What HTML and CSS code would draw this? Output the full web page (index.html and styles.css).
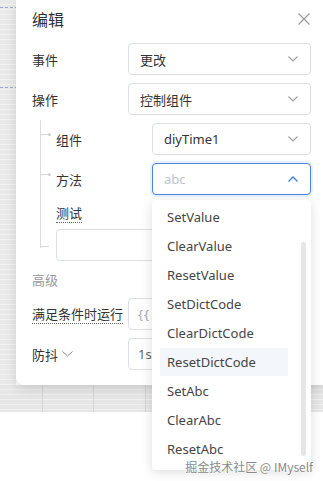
FILE: index.html
```html
<!DOCTYPE html>
<html lang="zh">
<head>
<meta charset="utf-8">
<link rel="stylesheet" href="styles.css">
</head>
<body>
<div class="page">
  <div class="top">
    <div class="strip"><div class="dash d1"></div><div class="dash d2"></div></div>
    <div class="dialog">
      <div class="header">
        <span class="title">编辑</span>
        <svg class="close" width="12" height="12" viewBox="0 0 12 12"><path d="M0.5 0.5L11.5 11.5M11.5 0.5L0.5 11.5" stroke="#9a9a9a" stroke-width="1.2" fill="none"/></svg>
      </div>
      <div class="form">
        <div class="row">
          <span class="lbl">事件</span>
          <div class="select"><span class="val">更改</span><svg class="chev" width="10" height="6" viewBox="0 0 10 6"><polyline points="0.5,0.5 5,5 9.5,0.5" stroke="#a0a0a0" stroke-width="1.1" fill="none"/></svg></div>
        </div>
        <div class="row">
          <span class="lbl">操作</span>
          <div class="select"><span class="val">控制组件</span><svg class="chev" width="10" height="6" viewBox="0 0 10 6"><polyline points="0.5,0.5 5,5 9.5,0.5" stroke="#a0a0a0" stroke-width="1.1" fill="none"/></svg></div>
        </div>
        <div class="nest">
          <div class="row conn">
            <span class="lbl">组件</span>
            <div class="select"><span class="val">diyTime1</span><svg class="chev" width="10" height="6" viewBox="0 0 10 6"><polyline points="0.5,0.5 5,5 9.5,0.5" stroke="#a0a0a0" stroke-width="1.1" fill="none"/></svg></div>
          </div>
          <div class="row conn">
            <span class="lbl">方法</span>
            <div class="select focus"><span class="ph">abc</span><svg class="chev" width="10" height="6" viewBox="0 0 10 6"><polyline points="0.5,5.5 5,1 9.5,5.5" stroke="#3f7fe0" stroke-width="1.4" fill="none"/></svg></div>
          </div>
          <div class="test">
            <span class="tlbl"><span class="dotted">测试</span></span>
            <div class="input conn2"></div>
          </div>
        </div>
        <div class="adv">高级</div>
        <div class="row">
          <span class="lbl"><span class="dotted">满足条件时运行</span></span>
          <div class="input"><span class="code">{{</span></div>
        </div>
        <div class="row">
          <span class="lbl">防抖 <svg class="lchev" width="11" height="6" viewBox="0 0 11 6"><polyline points="0.5,0.5 5.5,5 10.5,0.5" stroke="#888" stroke-width="1" fill="none"/></svg></span>
          <div class="input"><span class="val2">1s</span></div>
        </div>
      </div>
    </div>
  </div>
  <div class="band"></div>
  <div class="dropdown">
    <div class="item"><span>SetValue</span></div>
    <div class="item"><span>ClearValue</span></div>
    <div class="item"><span>ResetValue</span></div>
    <div class="item"><span>SetDictCode</span></div>
    <div class="item"><span>ClearDictCode</span></div>
    <div class="item hover"><span>ResetDictCode</span></div>
    <div class="item"><span>SetAbc</span></div>
    <div class="item"><span>ClearAbc</span></div>
    <div class="item"><span>ResetAbc</span></div>
    <div class="scrollbar"></div>
  </div>
  <div class="watermark">掘金技术社区 @ IMyself</div>
</div>
</body>
</html>
```
FILE: styles.css
```css
* { box-sizing: border-box; }
html, body { margin: 0; padding: 0; background: #fff; }
body { font-family: "Noto Sans", "Noto Sans CJK SC", sans-serif; font-size: 13px; color: #333; }
.page { position: relative; width: 323px; height: 481px; overflow: hidden; background: #fff; }
.top { display: flex; height: 385px; }
.strip {
  position: relative;
  width: 16px; flex: none; height: 412px;
  background: repeating-linear-gradient(to bottom, #e9e9e9 0, #e9e9e9 4px, #f3f3f3 4px, #f3f3f3 5px);
}
.dash { position: absolute; left: 0; width: 16px; height: 1px;
  background: repeating-linear-gradient(to right, #9fa6d6 0, #9fa6d6 3px, transparent 3px, transparent 5px); }
.d1 { top: 7px; }
.d2 { top: 87px; }
.dialog {
  position: relative; z-index: 2;
  flex: 1; height: 385px; background: #fff;
  border-bottom-left-radius: 8px;
  box-shadow: 0 4px 12px rgba(0,0,0,0.12);
}
.header { height: 38px; display: flex; align-items: center; justify-content: space-between; padding: 0 13px 0 16px; }
.title { font-size: 16px; color: #303133; font-family: "Noto Sans CJK SC", sans-serif; }
.close { display: block; }
.form { display: flex; flex-direction: column; gap: 8px; padding: 5px 12px 15px 16px; }
.row { display: flex; align-items: center; height: 32px; position: relative; }
.lbl { width: 96px; flex: none; font-family: "Noto Sans CJK SC", sans-serif; color: #333; display: flex; align-items: center; white-space: nowrap; font-size: 13px; }
.dotted { border-bottom: 1px dotted #666; line-height: 18px; }
.select, .input {
  flex: 1; height: 32px; border: 1px solid #dcdfe6; border-radius: 4px;
  display: flex; align-items: center; justify-content: space-between;
  padding: 0 12px 0 11px; background: #fff;
}
.val { color: #333; font-family: "Noto Sans", "Noto Sans CJK SC", sans-serif; font-size: 13px; }
.ph { color: #c0c4cc; }
.select.focus { border-color: #4a86e0; box-shadow: 0 0 0 2px rgba(64,140,230,0.12); }
.chev { display: block; }
.nest { position: relative; display: flex; flex-direction: column; gap: 8px; padding-left: 24px; }
.nest::before { content: ""; position: absolute; left: 8px; top: -3px; height: 128px; width: 1px; background: #dcdcdc; }
.conn::before { content: ""; position: absolute; left: -16px; top: 11px; width: 9px; height: 1px; background: #d8d8d8; }
.conn::after { content: ""; position: absolute; left: -8px; top: 10px; width: 3px; height: 3px; border-radius: 50%; background: #d0d0d0; }
.test { display: flex; flex-direction: column; gap: 6px; }
.tlbl { height: 20px; display: flex; align-items: center; font-family: "Noto Sans CJK SC", sans-serif; }
.test .input { flex: none; position: relative; }
.conn2::before { content: ""; position: absolute; left: -17px; top: 16px; width: 9px; height: 1px; background: #d8d8d8; }
.adv { height: 20px; line-height: 20px; color: #999; font-size: 13px; font-family: "Noto Sans CJK SC", sans-serif; margin-top: 1px; }
.code { color: #aaa; letter-spacing: 1px; }
.val2 { color: #666; }
.input { justify-content: flex-start; padding-left: 9px; }
.lchev { margin-left: 4px; }
.band {
  position: relative; z-index: 1;
  height: 27px;
  background:
    linear-gradient(to right, transparent 42px, #d6d6d6 42px, #d6d6d6 43px, transparent 43px, transparent 93px, #d6d6d6 93px, #d6d6d6 94px, transparent 94px, transparent 145px, #d6d6d6 145px, #d6d6d6 146px, transparent 146px),
    repeating-linear-gradient(to bottom, #e6e6e6 0, #e6e6e6 4px, #f0f0f0 4px, #f0f0f0 5px);
}
.dropdown {
  position: absolute; z-index: 5; left: 152px; top: 200px; width: 159px; height: 270px;
  background: #fff; border-radius: 4px;
  box-shadow: 0 2px 12px rgba(0,0,0,0.14);
  padding: 3px 23px 0 8px; overflow: hidden;
}
.item { height: 28px; margin-bottom: 1px; padding: 5px 0 5px 7px; line-height: 18px; color: #444; font-size: 13px; border-radius: 2px; }
.item.hover { background: #f3f6fb; }
.scrollbar { position: absolute; right: 5px; top: 42px; width: 5px; height: 214px; border-radius: 3px; background: #e6e6e6; }
.watermark {
  position: absolute; z-index: 6; right: 10px; top: 461px;
  font-size: 12px; color: #8a8a8a; font-family: "Noto Sans CJK SC", sans-serif;
  text-shadow: 0 0 2px #fff, 0 0 2px #fff;
  line-height: 12px;
}
```
